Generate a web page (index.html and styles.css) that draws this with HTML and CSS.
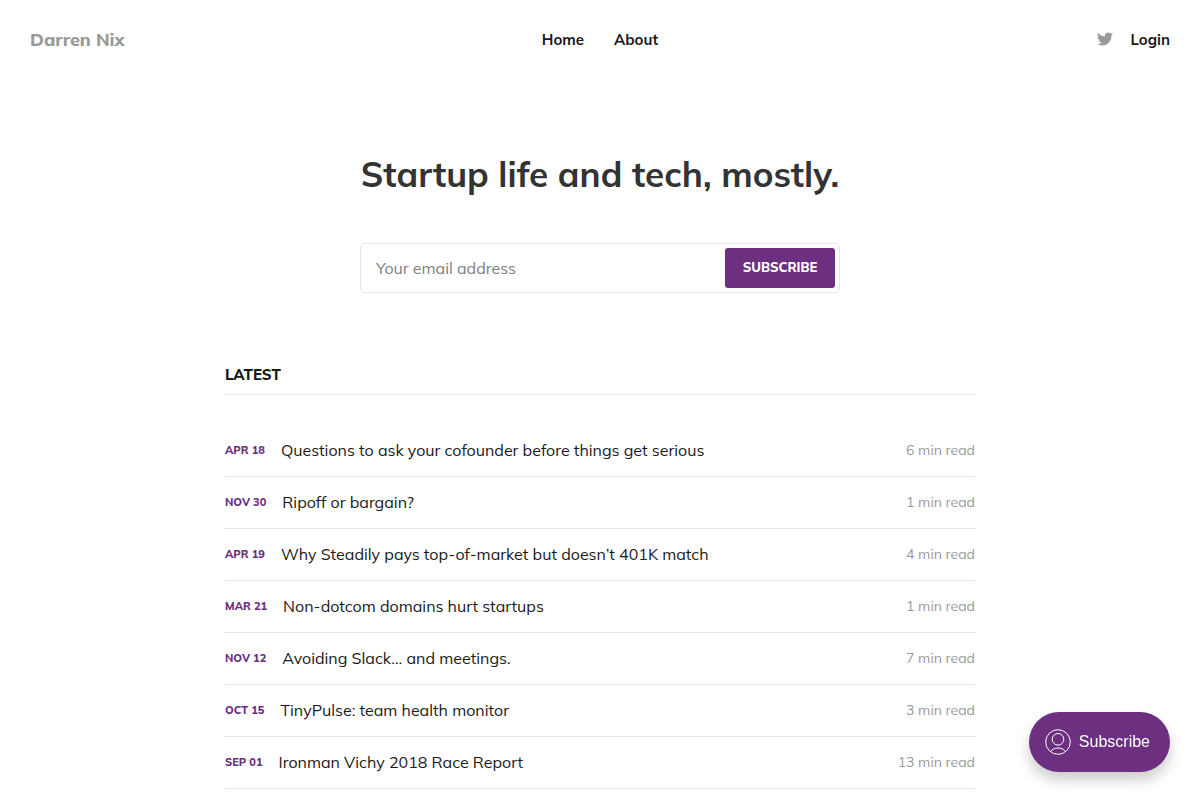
FILE: index.html
```html
<!DOCTYPE html>
<html lang="en">
  <head>
    <meta charset="UTF-8" />
    <meta name="viewport" content="width=device-width, initial-scale=1.0" />
    <title>Darren Nix</title>
    <link rel="stylesheet" href="styles.css">
  </head>

  <body>
    <header class="site-header">
      <a class="logo" href="/">Darren Nix</a>
      <nav class="main-nav">
        <a href="/">Home</a>
        <a href="/about/">About</a>
      </nav>
      <div class="header-actions">
        <a class="social-link" href="https://twitter.com/darrennix" aria-label="Twitter">
          <svg width="16" height="16" viewBox="0 0 24 24" fill="currentColor" aria-hidden="true">
            <path d="M23.95 4.57a10 10 0 0 1-2.82.77 4.96 4.96 0 0 0 2.16-2.72c-.95.55-2 .95-3.13 1.18a4.92 4.92 0 0 0-8.38 4.48A13.98 13.98 0 0 1 1.64 3.16a4.92 4.92 0 0 0 1.52 6.57 4.9 4.9 0 0 1-2.23-.61v.06a4.92 4.92 0 0 0 3.95 4.83 5 5 0 0 1-2.21.08 4.94 4.94 0 0 0 4.6 3.42A9.87 9.87 0 0 1 0 19.54a13.99 13.99 0 0 0 7.55 2.21c9.05 0 14-7.5 14-13.98 0-.21 0-.42-.02-.63a9.94 9.94 0 0 0 2.42-2.57z" />
          </svg>
        </a>
        <a href="/signin/">Login</a>
      </div>
    </header>

    <main>
      <section class="hero">
        <h1>Startup life and tech, mostly.</h1>
        <form class="subscribe-form">
          <input type="email" name="email" placeholder="Your email address" aria-label="Your email address" required />
          <button type="submit">Subscribe</button>
        </form>
      </section>

      <section class="posts">
        <h2>Latest</h2>
        <ul class="post-list">
          <li class="post">
            <time>Apr 18</time>
            <a href="#">Questions to ask your cofounder before things get serious</a>
            <span class="read-time">6 min read</span>
          </li>
          <li class="post">
            <time>Nov 30</time>
            <a href="#">Ripoff or bargain?</a>
            <span class="read-time">1 min read</span>
          </li>
          <li class="post">
            <time>Apr 19</time>
            <a href="#">Why Steadily pays top-of-market but doesn’t 401K match</a>
            <span class="read-time">4 min read</span>
          </li>
          <li class="post">
            <time>Mar 21</time>
            <a href="#">Non-dotcom domains hurt startups</a>
            <span class="read-time">1 min read</span>
          </li>
          <li class="post">
            <time>Nov 12</time>
            <a href="#">Avoiding Slack… and meetings.</a>
            <span class="read-time">7 min read</span>
          </li>
          <li class="post">
            <time>Oct 15</time>
            <a href="#">TinyPulse: team health monitor</a>
            <span class="read-time">3 min read</span>
          </li>
          <li class="post">
            <time>Sep 01</time>
            <a href="#">Ironman Vichy 2018 Race Report</a>
            <span class="read-time">13 min read</span>
          </li>
        </ul>
      </section>
    </main>

    <button class="portal-button" type="button">
      <svg width="26" height="26" viewBox="0 0 26 26" fill="none" stroke="currentColor" aria-hidden="true">
        <circle cx="13" cy="13" r="12.3" />
        <circle cx="13" cy="10.3" r="5.8" />
        <path d="M5.5 22.5c1.6-2.2 4.3-3.5 7.5-3.5s5.9 1.3 7.5 3.5" />
      </svg>
      Subscribe
    </button>
  </body>
</html>
```
FILE: styles.css
```css
* {
  box-sizing: border-box;
}

body {
  margin: 0;
  background-color: #fff;
  color: #1a1a1a;
  font-family: Mulish, Muli, Lato, sans-serif;
  font-size: 16px;
  line-height: 27px;
}

a {
  color: inherit;
  text-decoration: none;
}

.site-header {
  display: grid;
  grid-template-columns: 1fr auto 1fr;
  align-items: center;
  height: 80px;
  padding: 0 30px 2px;
  font-size: 15px;
  font-weight: 700;
}

.logo {
  color: #999;
  font-size: 18px;
  font-weight: 800;
}

.main-nav {
  display: flex;
  gap: 30px;
}

.header-actions {
  display: flex;
  justify-content: flex-end;
  align-items: center;
  gap: 18px;
}

.social-link {
  display: flex;
  color: #999;
}

.hero {
  padding: 71px 30px 68px;
  text-align: center;
}

.hero h1 {
  margin: 0 0 45px;
  color: #333;
  font-size: 35px;
  line-height: 47px;
}

.subscribe-form {
  display: flex;
  max-width: 480px;
  height: 50px;
  margin: 0 auto;
  padding: 4px;
  border: 1px solid #e5e5e5;
  border-radius: 5px;
}

.subscribe-form input {
  flex: 1;
  min-width: 0;
  padding: 0 11px;
  border: none;
  background: none;
  font: inherit;
  outline: none;
}

.subscribe-form input::placeholder {
  color: #808080;
}

.subscribe-form button {
  width: 110px;
  padding: 0 0 2px;
  border: none;
  border-radius: 3px;
  background-color: #6d2f7f;
  color: #fff;
  font: inherit;
  font-size: 13px;
  font-weight: 800;
  text-transform: uppercase;
  cursor: pointer;
}

.posts {
  max-width: 810px;
  margin: 0 auto;
  padding: 0 30px;
}

.posts h2 {
  margin: 0 0 30px;
  padding-bottom: 6px;
  border-bottom: 1px solid #e5e5e5;
  font-size: 15px;
  font-weight: 800;
  text-transform: uppercase;
}

.post-list {
  margin: 0;
  padding: 0;
  list-style: none;
}

.post {
  display: flex;
  align-items: center;
  height: 52px;
  border-bottom: 1px solid #e5e5e5;
}

.post time {
  margin-right: 16px;
  color: #6d2f7f;
  font-size: 11px;
  font-weight: 800;
  text-transform: uppercase;
}

.read-time {
  margin-left: auto;
  color: #999;
  font-size: 14px;
}

.portal-button {
  position: fixed;
  right: 30px;
  bottom: 28px;
  display: flex;
  align-items: center;
  gap: 8px;
  height: 60px;
  padding: 0 20px 0 16px;
  border: none;
  border-radius: 30px;
  background-color: #6d2f7f;
  box-shadow: 0 8px 14px rgba(0, 0, 0, 0.2);
  color: #fff;
  font-family: "Liberation Sans", Arial, sans-serif;
  font-size: 16px;
  cursor: pointer;
}
```
